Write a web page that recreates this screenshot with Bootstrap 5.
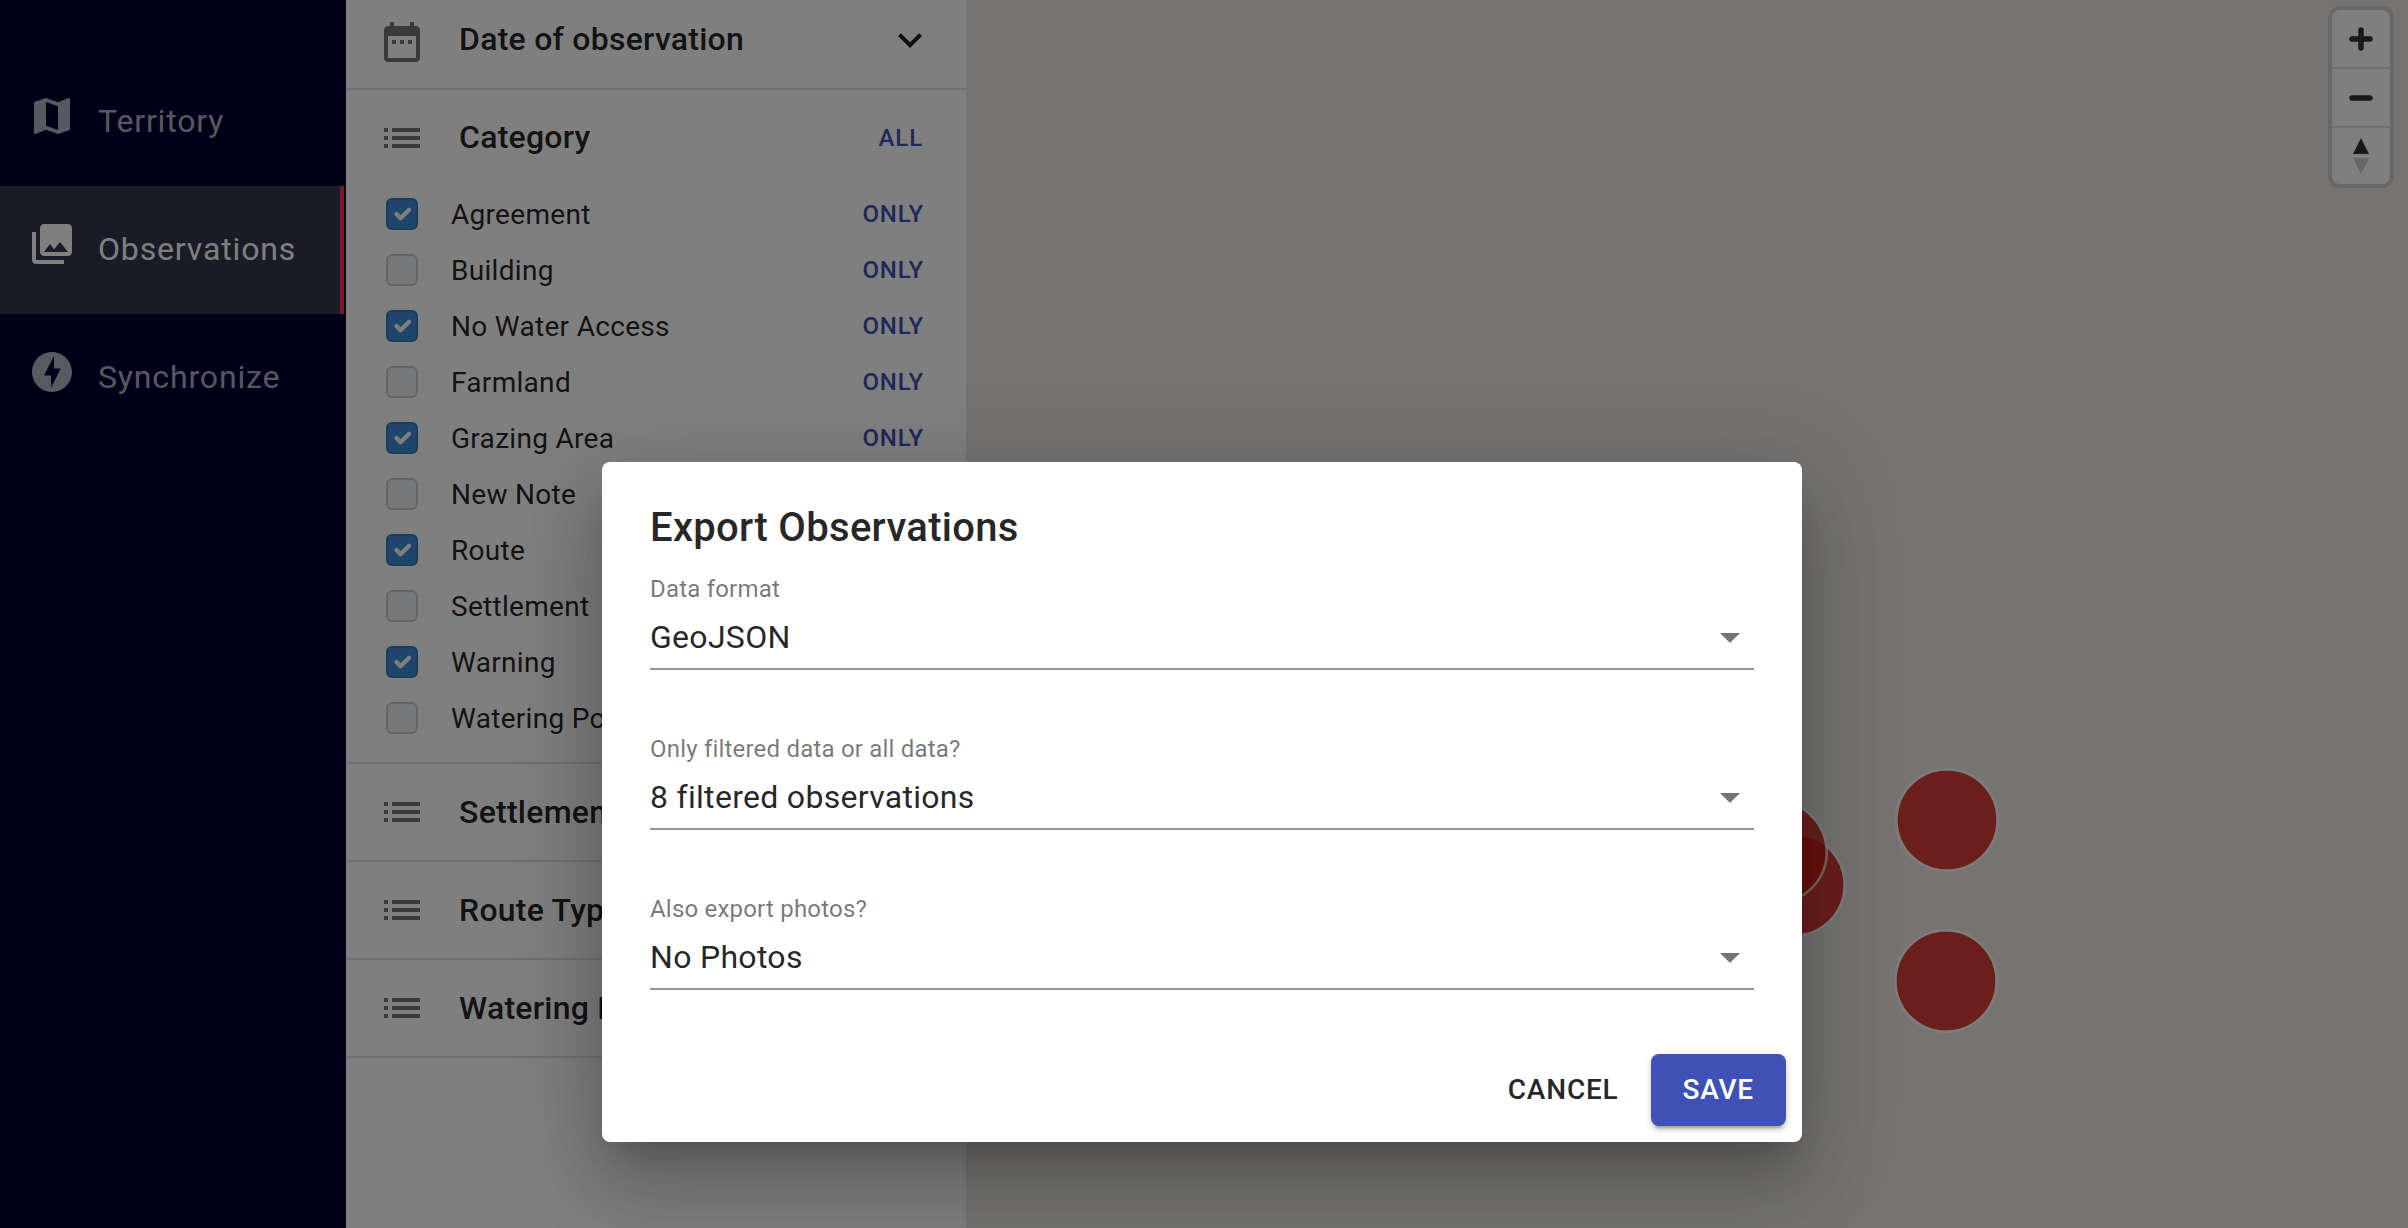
<!DOCTYPE html>
<html lang="en">
<head>
    <meta charset="UTF-8">
    <meta name="viewport" content="width=device-width, initial-scale=1.0">
    <title>Observations</title>
    <link href="https://cdn.jsdelivr.net/npm/bootstrap@5.3.0/dist/css/bootstrap.min.css" rel="stylesheet">
    <script src="https://cdn.jsdelivr.net/npm/bootstrap@5.3.0/dist/js/bootstrap.bundle.min.js"></script>
    <style>
        html, body {
            height: 100%;
            overflow: hidden;
        }
        body {
            font-family: Roboto, "Liberation Sans", sans-serif;
            color: rgba(0, 0, 0, .87);
            background: #fff;
        }
        .app-root {
            height: 1228px;
        }
        /* left nav */
        .side-nav {
            width: 346px;
            flex: none;
            background: #000033;
            padding: 58px 2px 0 0;
        }
        .nav-row {
            height: 128px;
            padding-left: 28px;
            color: rgba(255, 255, 255, .7);
            font-size: 32px;
            letter-spacing: .85px;
            border-right: 4px solid transparent;
        }
        .nav-row span {
            margin-top: -2px;
        }
        .nav-row svg {
            width: 48px;
            height: 48px;
            fill: currentColor;
            margin: -12px 22px 0 0;
            flex: none;
        }
        .nav-row.is-active {
            background: #33364f;
            border-right-color: #ff2a55;
            color: #fff;
        }
        /* filter column */
        .filter-panel {
            width: 620px;
            flex: none;
            background: #fff;
        }
        .filter-head {
            height: 98px;
            padding: 0 44px 0 32px;
            border-bottom: 2px solid #e0e0e0;
        }
        .filter-head.first-head {
            height: 90px;
            padding-bottom: 8px;
        }
        .first-head .head-icon {
            margin-top: 4px;
        }
        .first-head .head-title {
            margin-top: -2px;
        }
        .filter-head.open-head {
            height: 96px;
            padding-right: 43px;
            border-bottom: 0;
        }
        .open-head .head-title {
            margin-top: -2px;
        }
        .head-icon {
            width: 48px;
            height: 48px;
            margin: 0 33px 0 0;
            fill: #757575;
            flex: none;
        }
        .head-title {
            font-size: 32px;
            font-weight: 500;
            line-height: 1;
            letter-spacing: .25px;
            white-space: nowrap;
        }
        .chevron-icon {
            width: 48px;
            height: 48px;
            fill: rgba(0, 0, 0, .87);
            margin-right: -12px;
        }
        .text-link {
            color: #3f51b5;
            font-size: 24px;
            font-weight: 500;
            letter-spacing: .85px;
            text-transform: uppercase;
        }
        .cat-list {
            padding: 0 42px 16px 40px;
            border-bottom: 2px solid #e0e0e0;
        }
        .cat-row {
            height: 56px;
        }
        .cat-row .form-check-input {
            width: 32px;
            height: 32px;
            margin: 0 33px 0 0;
            border: 2px solid #cacaca;
            border-radius: 6px;
            background-color: #eef1f4;
            flex: none;
        }
        .cat-row .form-check-input:checked {
            background-color: #3f8ad8;
            border-color: #3678bf;
        }
        .cat-label {
            font-size: 28px;
            letter-spacing: .3px;
            padding-top: 2px;
        }
        /* map */
        .map-pane {
            background: #ebe8e4;
            overflow: hidden;
        }
        .map-marks {
            position: absolute;
            left: 0;
            top: 0;
        }
        .zoom-box {
            position: absolute;
            top: 6px;
            right: 14px;
            width: 66px;
            height: 182px;
            border: 4px solid rgba(0, 0, 0, .1);
            border-radius: 12px;
            background: #fff;
            background-clip: padding-box;
        }
        .zoom-btn {
            height: 59px;
            border-bottom: 2px solid #ddd;
        }
        .zoom-btn:last-child {
            height: 56px;
            border-bottom: 0;
        }
        /* modal on top */
        .dim-layer {
            position: absolute;
            inset: 0;
            background: rgba(0, 0, 0, .5);
        }
        .export-dialog {
            position: absolute;
            left: 602px;
            top: 462px;
            width: 1200px;
            height: 680px;
            background: #fff;
            border-radius: 8px;
            padding: 42px 16px 16px 48px;
            box-shadow: 0 22px 30px -14px rgba(0, 0, 0, .2), 0 48px 76px 6px rgba(0, 0, 0, .14), 0 18px 92px 16px rgba(0, 0, 0, .12);
        }
        .dialog-title {
            font-size: 40px;
            font-weight: 500;
            line-height: 48px;
            letter-spacing: .3px;
            margin: 0 0 23px;
            color: rgba(0, 0, 0, .87);
        }
        .field-box {
            width: 1104px;
            height: 160px;
        }
        .field-label {
            font-size: 24px;
            line-height: 28px;
            color: rgba(0, 0, 0, .54);
            letter-spacing: .2px;
        }
        .field-value {
            height: 61px;
            margin-top: 6px;
            padding-bottom: 3px;
            border-bottom: 2px solid #949494;
            font-size: 32px;
            letter-spacing: .3px;
            line-height: 1;
        }
        .field-value svg {
            width: 48px;
            height: 48px;
            fill: #757575;
        }
        .dialog-actions {
            position: absolute;
            right: 16px;
            bottom: 16px;
        }
        .dlg-btn {
            height: 72px;
            padding: 0 32px;
            font-size: 28px;
            font-weight: 500;
            letter-spacing: .8px;
            border-radius: 8px;
            border: 0;
            text-transform: uppercase;
            color: rgba(0, 0, 0, .87);
            background: transparent;
        }
        .dlg-btn.save-btn {
            background: #3f51b5;
            color: #fff;
            box-shadow: 0 6px 2px -4px rgba(0, 0, 0, .2), 0 4px 4px 0 rgba(0, 0, 0, .14), 0 2px 10px 0 rgba(0, 0, 0, .12);
        }
    </style>
</head>

<body>
    <div class="app-root d-flex position-relative">
        <!-- nav -->
        <div class="side-nav">
            <div class="nav-row d-flex align-items-center">
                <svg viewBox="0 0 24 24"><path d="M20.5 3l-.16.03L15 5.1 9 3 3.36 4.9c-.21.07-.36.25-.36.48V20.5c0 .28.22.5.5.5l.16-.03L9 18.9l6 2.1 5.64-1.9c.21-.07.36-.25.36-.48V3.5c0-.28-.22-.5-.5-.5zM15 19l-6-2.11V5l6 2.11V19z"/></svg>
                <span>Territory</span>
            </div>
            <div class="nav-row is-active d-flex align-items-center">
                <svg viewBox="0 0 24 24"><path d="M22 16V4c0-1.1-.9-2-2-2H8c-1.1 0-2 .9-2 2v12c0 1.1.9 2 2 2h12c1.1 0 2-.9 2-2zm-11-4l2.03 2.71L16 11l4 5H8l3-4zM2 6v14c0 1.1.9 2 2 2h14v-2H4V6H2z"/></svg>
                <span>Observations</span>
            </div>
            <div class="nav-row d-flex align-items-center">
                <svg viewBox="0 0 24 24"><path d="M12 2.02c-5.51 0-9.98 4.47-9.98 9.98s4.47 9.98 9.98 9.98 9.98-4.47 9.98-9.98S17.51 2.02 12 2.02zM11.48 20v-6.26H8L13 4v6.26h3.35L11.48 20z"/></svg>
                <span>Synchronize</span>
            </div>
        </div>

        <!-- filters -->
        <div class="filter-panel">
            <div class="filter-head first-head d-flex align-items-center">
                <svg class="head-icon" viewBox="0 0 24 24"><path d="M9 11H7v2h2v-2zm4 0h-2v2h2v-2zm4 0h-2v2h2v-2zm2-7h-1V2h-2v2H8V2H6v2H5c-1.11 0-1.99.9-1.99 2L3 20c0 1.1.89 2 2 2h14c1.1 0 2-.9 2-2V6c0-1.1-.9-2-2-2zm0 16H5V9h14v11z"/></svg>
                <span class="head-title flex-grow-1">Date of observation</span>
                <svg class="chevron-icon" viewBox="0 0 24 24"><path d="M16.59 8.59L12 13.17 7.41 8.59 6 10l6 6 6-6z"/></svg>
            </div>
            <div class="filter-head open-head d-flex align-items-center">
                <svg class="head-icon" viewBox="0 0 24 24"><path d="M3 13h2v-2H3v2zm0 4h2v-2H3v2zm0-8h2V7H3v2zm4 4h14v-2H7v2zm0 4h14v-2H7v2zM7 7v2h14V7H7z"/></svg>
                <span class="head-title flex-grow-1">Category</span>
                <span class="text-link">All</span>
            </div>
            <div class="cat-list" id="catList"></div>
            <div class="filter-head d-flex align-items-center">
                <svg class="head-icon" viewBox="0 0 24 24"><path d="M3 13h2v-2H3v2zm0 4h2v-2H3v2zm0-8h2V7H3v2zm4 4h14v-2H7v2zm0 4h14v-2H7v2zM7 7v2h14V7H7z"/></svg>
                <span class="head-title">Settlement Type</span>
            </div>
            <div class="filter-head d-flex align-items-center">
                <svg class="head-icon" viewBox="0 0 24 24"><path d="M3 13h2v-2H3v2zm0 4h2v-2H3v2zm0-8h2V7H3v2zm4 4h14v-2H7v2zm0 4h14v-2H7v2zM7 7v2h14V7H7z"/></svg>
                <span class="head-title">Route Type</span>
            </div>
            <div class="filter-head d-flex align-items-center">
                <svg class="head-icon" viewBox="0 0 24 24"><path d="M3 13h2v-2H3v2zm0 4h2v-2H3v2zm0-8h2V7H3v2zm4 4h14v-2H7v2zm0 4h14v-2H7v2zM7 7v2h14V7H7z"/></svg>
                <span class="head-title">Watering Point</span>
            </div>
        </div>

        <!-- map -->
        <div class="map-pane flex-grow-1 position-relative">
            <svg class="map-marks" width="1442" height="1228" viewBox="966 0 1442 1228">
                <g>
                    <circle cx="1794" cy="885" r="49.5" fill="#cf1a12" fill-opacity=".82"/>
                    <circle cx="1794" cy="885" r="50.8" fill="none" stroke="#fff" stroke-opacity=".7" stroke-width="2.6"/>
                    <circle cx="1776" cy="852" r="49.5" fill="#cf1a12" fill-opacity=".82"/>
                    <circle cx="1776" cy="852" r="50.8" fill="none" stroke="#fff" stroke-opacity=".7" stroke-width="2.6"/>
                    <circle cx="1947" cy="820" r="49.5" fill="#cf1a12" fill-opacity=".82"/>
                    <circle cx="1947" cy="820" r="50.8" fill="none" stroke="#fff" stroke-opacity=".7" stroke-width="2.6"/>
                    <circle cx="1946" cy="981" r="49.5" fill="#cf1a12" fill-opacity=".82"/>
                    <circle cx="1946" cy="981" r="50.8" fill="none" stroke="#fff" stroke-opacity=".7" stroke-width="2.6"/>
                </g>
            </svg>
            <div class="zoom-box">
                <div class="zoom-btn d-flex align-items-center justify-content-center">
                    <svg width="24" height="24" viewBox="0 0 24 24"><path d="M12 3v18M3 12h18" stroke="#333" stroke-width="5.5" stroke-linecap="round"/></svg>
                </div>
                <div class="zoom-btn d-flex align-items-center justify-content-center">
                    <svg width="24" height="24" viewBox="0 0 24 24"><path d="M3 12h18" stroke="#333" stroke-width="5.5" stroke-linecap="round"/></svg>
                </div>
                <div class="zoom-btn d-flex align-items-center justify-content-center">
                    <svg width="16" height="36" viewBox="0 0 16 36"><path d="M8 0l8 16H0z" fill="#333"/><path d="M8 36L0 20h16z" fill="#ccc"/></svg>
                </div>
            </div>
        </div>

        <!-- export dialog -->
        <div class="dim-layer"></div>
        <div class="export-dialog">
            <h2 class="dialog-title">Export Observations</h2>
            <div class="field-box">
                <div class="field-label">Data format</div>
                <div class="field-value d-flex align-items-center justify-content-between"><span>GeoJSON</span><svg viewBox="0 0 24 24"><path d="M7 10l5 5 5-5z"/></svg></div>
            </div>
            <div class="field-box">
                <div class="field-label">Only filtered data or all data?</div>
                <div class="field-value d-flex align-items-center justify-content-between"><span>8 filtered observations</span><svg viewBox="0 0 24 24"><path d="M7 10l5 5 5-5z"/></svg></div>
            </div>
            <div class="field-box">
                <div class="field-label">Also export photos?</div>
                <div class="field-value d-flex align-items-center justify-content-between"><span>No Photos</span><svg viewBox="0 0 24 24"><path d="M7 10l5 5 5-5z"/></svg></div>
            </div>
            <div class="dialog-actions d-flex">
                <button type="button" class="dlg-btn">Cancel</button>
                <button type="button" class="dlg-btn save-btn">Save</button>
            </div>
        </div>
    </div>

    <script>
        // category rows
        const cats = ["Agreement", "Building", "No Water Access", "Farmland", "Grazing Area", "New Note", "Route", "Settlement", "Warning", "Watering Point"];
        document.getElementById("catList").innerHTML = cats.map((name, i) => `
            <div class="cat-row d-flex align-items-center">
                <input class="form-check-input" type="checkbox" ${i % 2 === 0 ? "checked" : ""}>
                <span class="cat-label flex-grow-1">${name}</span>
                <span class="text-link">Only</span>
            </div>`).join("");
    </script>
</body>
</html>
